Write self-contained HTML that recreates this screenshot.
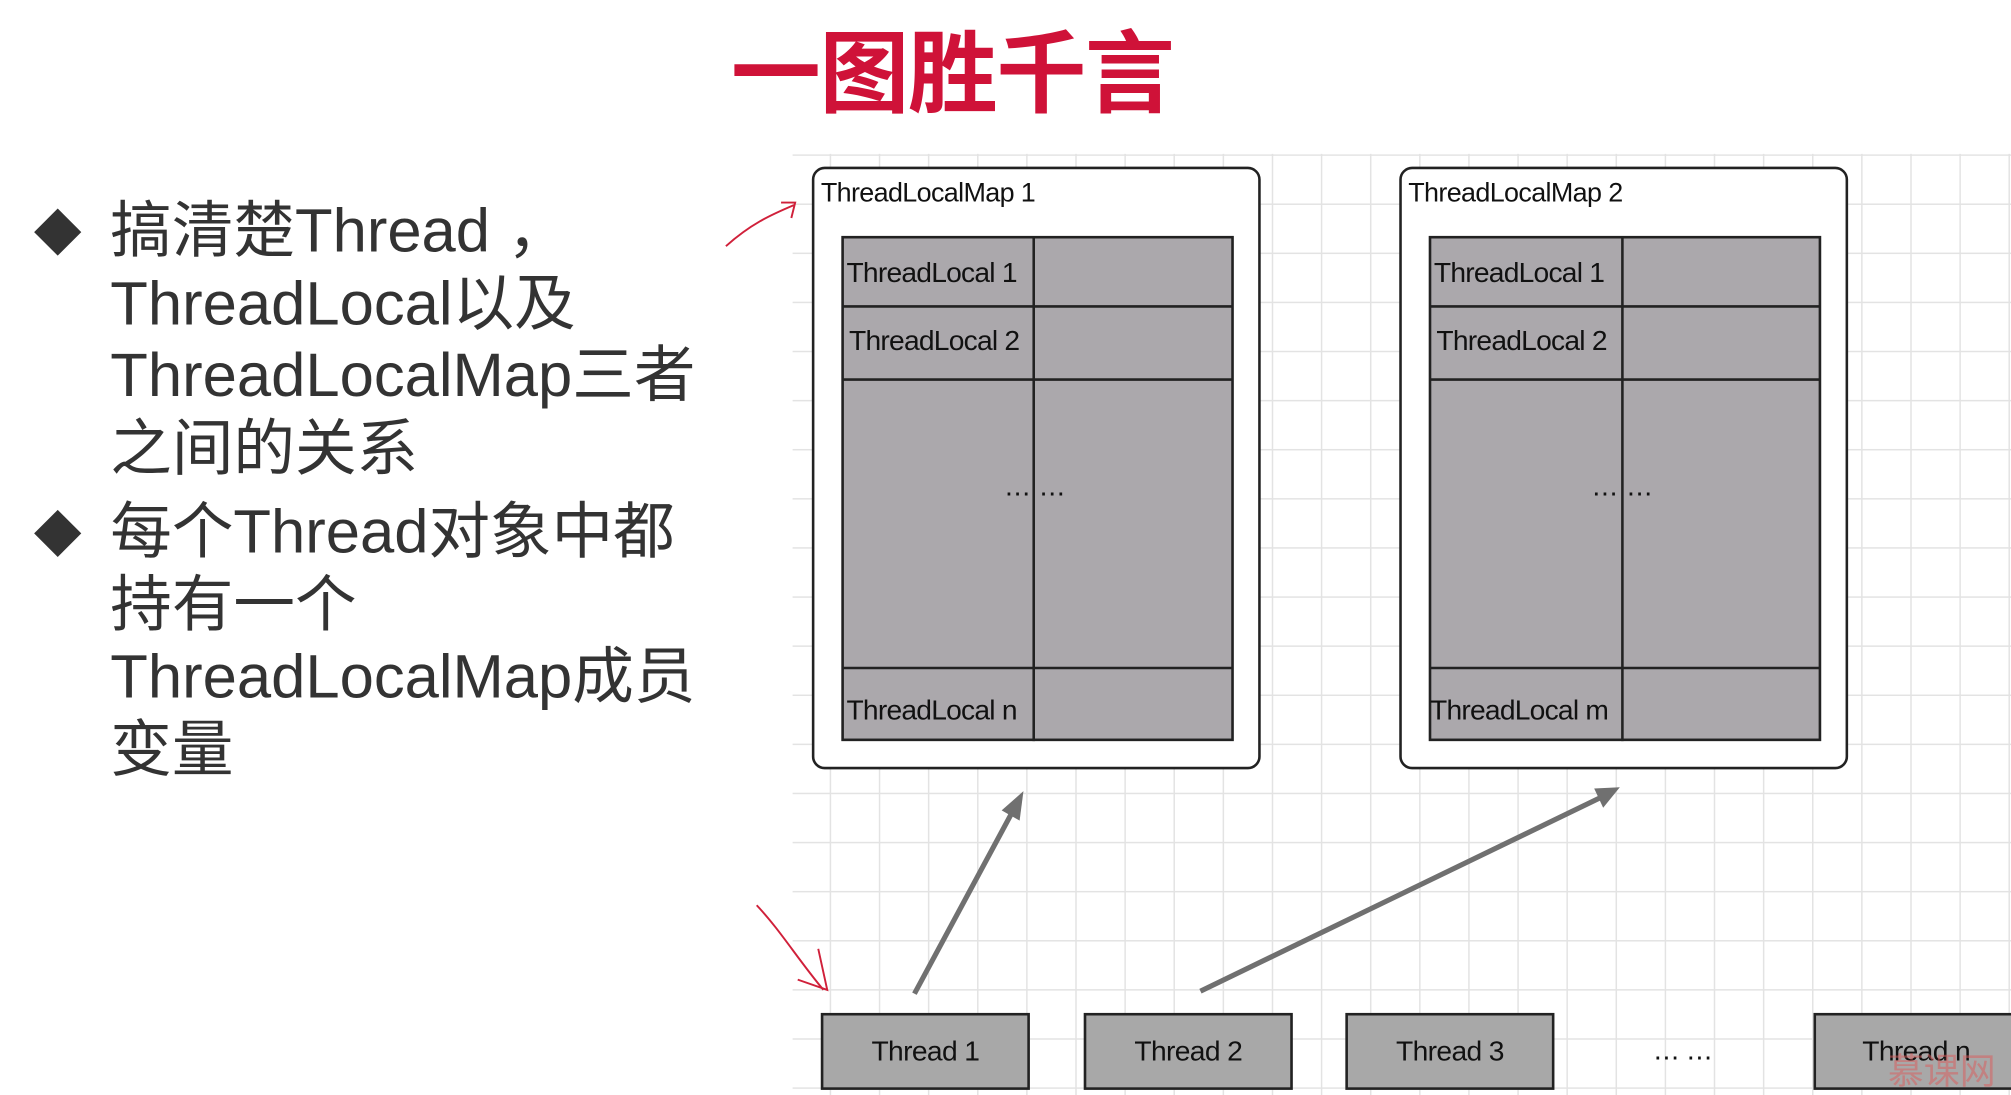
<!DOCTYPE html>
<html><head><meta charset="utf-8"><style>
html,body{margin:0;padding:0;background:#fff;overflow:hidden}
#w{width:1568px;height:854px;position:relative;transform:scale(1.28253,1.28220);transform-origin:0 0;font-family:"Liberation Sans","Noto Sans CJK SC",sans-serif}
.a{position:absolute}
.grid{left:618px;top:120px;width:950px;height:734px;
background-image:linear-gradient(to right,#e3e3e3 1px,transparent 1px),linear-gradient(to bottom,#e3e3e3 1px,transparent 1px);
background-size:38.3px 38.3px;background-position:-9.4px 0.4px}
.title{left:570px;top:8px;font-size:70px;font-weight:bold;color:#cf1238;font-family:"Noto Sans CJK SC",sans-serif;letter-spacing:-1px;line-height:90px}
.txt{left:86px;font-size:48px;color:#333;line-height:56.5px;font-family:"Liberation Sans","Noto Sans CJK SC",sans-serif;letter-spacing:0}
.dia{width:26px;height:26px;background:#333;transform:rotate(45deg)}
.box{background:#fff;border:2px solid #222;border-radius:10px;width:346px;height:466px}
.lbl{font-size:21px;color:#111;letter-spacing:-0.5px}
.tbl{background:#aba8ac;border:2px solid #222;box-sizing:border-box;width:306px;height:394px}
.th{background:#a8a8a8;border:2px solid #222;box-sizing:border-box;width:163px;height:60px;font-size:22px;text-align:center;line-height:56px;color:#111;letter-spacing:-0.5px}
</style></head><body><div id="w">
<div class="a grid"></div>
<div class="a title">一图胜千言</div>
<div class="a dia" style="left:32px;top:168px"></div>
<div class="a dia" style="left:32px;top:403px"></div>
<div class="a txt" style="top:153px">搞清楚Thread ，<br>ThreadLocal以及<br>ThreadLocalMap三者<br>之间的关系</div>
<div class="a txt" style="top:388px">每个Thread对象中都<br>持有一个<br>ThreadLocalMap成员<br>变量</div>

<div class="a box" style="left:633px;top:130px"></div>
<div class="a lbl" style="left:640px;top:139px">ThreadLocalMap 1</div>
<div class="a tbl" style="left:656px;top:184px"></div>
<div class="a box" style="left:1091px;top:130px"></div>
<div class="a lbl" style="left:1098px;top:139px">ThreadLocalMap 2</div>
<div class="a tbl" style="left:1114px;top:184px"></div>

<svg class="a" style="left:0;top:0" width="1568" height="854">
<g stroke="#222" stroke-width="2" fill="none">
<line x1="806" y1="185" x2="806" y2="578"/><line x1="657" y1="239" x2="961" y2="239"/><line x1="657" y1="296" x2="961" y2="296"/><line x1="657" y1="521" x2="961" y2="521"/>
<line x1="1265" y1="185" x2="1265" y2="578"/><line x1="1115" y1="239" x2="1419" y2="239"/><line x1="1115" y1="296" x2="1419" y2="296"/><line x1="1115" y1="521" x2="1419" y2="521"/>
</g>
<g font-family="Liberation Sans" font-size="22" fill="#111" letter-spacing="-0.6">
<text x="660" y="220">ThreadLocal 1</text><text x="662" y="273">ThreadLocal 2</text><text x="660" y="561">ThreadLocal n</text>
<text x="1118" y="220">ThreadLocal 1</text><text x="1120" y="273">ThreadLocal 2</text><text x="1115" y="561">ThreadLocal m</text>
<text x="783" y="391">···</text><text x="810" y="391">···</text><text x="1241" y="391">···</text><text x="1268" y="391">···</text>
<text x="1289" y="831">··· ···</text>
</g>
<g stroke="#707070" stroke-width="4" fill="#707070">
<line x1="713" y1="775" x2="790" y2="632"/><polygon points="798,617 781,632 795,640" stroke="none"/>
<line x1="936" y1="773" x2="1248" y2="622"/><polygon points="1263,614 1243,615 1250,630" stroke="none"/>
</g>
<g stroke="#d0203a" stroke-width="1.5" fill="none">
<path d="M566 192 C585 175 600 168 619 160"/><path d="M609 158 L620 158 L617 170"/>
<path d="M590 706 C608 725 622 748 642 772"/><path d="M622 764 L645 772 L638 740"/>
</g>
</svg>

<div class="a th" style="left:640px;top:790px">Thread 1</div>
<div class="a th" style="left:845px;top:790px">Thread 2</div>
<div class="a th" style="left:1049px;top:790px">Thread 3</div>
<div class="a th" style="left:1414px;top:790px;width:170px;text-align:left;padding-left:36px">Thread n</div>
<div class="a" style="left:1472px;top:814px;font-size:28px;color:rgba(220,90,90,0.5);font-family:'Noto Sans CJK SC',sans-serif">慕课网</div>
</div></body></html>
